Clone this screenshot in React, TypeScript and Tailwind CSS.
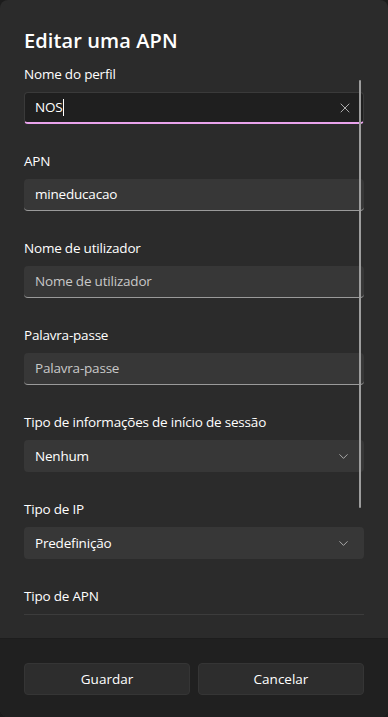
import { X, ChevronDown } from "lucide-react";

const font = { fontFamily: '"Segoe UI", "Open Sans", "Noto Sans", sans-serif' };

function Label({ children }: { children: string }) {
  return <div className="h-5 text-[13.5px] leading-5 tracking-[-0.2px] text-[#ffffff]">{children}</div>;
}

function TextBox({ value, placeholder }: { value?: string; placeholder?: string }) {
  return (
    <div className="flex h-8 items-center rounded-[4px] border-b border-b-[#9a9a9a] bg-[#373737] px-[11px] text-[13.5px] tracking-[-0.2px]">
      {value ? (
        <span className="text-white">{value}</span>
      ) : (
        <span className="text-[#c8c8c8]">{placeholder}</span>
      )}
    </div>
  );
}

function Select({ value }: { value: string }) {
  return (
    <div className="flex h-8 items-center justify-between rounded-[4px] bg-[#373737] pl-[11px] pr-[13px] text-[13.5px] tracking-[-0.2px] text-white">
      <span>{value}</span>
      <ChevronDown size={15} strokeWidth={1.2} className="text-[#cfcfcf]" />
    </div>
  );
}

function Field({ label, children }: { label: string; children: React.ReactNode }) {
  return (
    <div className="flex flex-col gap-2">
      <Label>{label}</Label>
      {children}
    </div>
  );
}

export default function App() {
  return (
    <div className="h-[717px] w-[388px] bg-[#1c1c1c]" style={font}>
      <div className="flex h-full flex-col overflow-hidden rounded-lg bg-[#2b2b2b]">
        <div className="relative flex-1 overflow-hidden">
          <div className="px-6 pt-[27px]">
            <h1 className="text-[20px] font-semibold leading-7 tracking-[0.1px] text-white">Editar uma APN</h1>
            <div className="mt-[9px] flex flex-col gap-[27px]">
              <Field label="Nome do perfil">
                <div className="flex h-8 items-center justify-between rounded-[4px] border border-[#3a3a3a] border-b-2 border-b-[#e9a3ec] bg-[#1f1f1f] pl-[10px] pr-[10px] text-[13.5px] tracking-[-0.2px] text-white">
                  <span className="flex items-center">
                    NOS<span className="ml-[1px] inline-block h-[17px] w-px bg-white" />
                  </span>
                  <X size={16} strokeWidth={1.2} className="text-[#cfcfcf]" />
                </div>
              </Field>
              <Field label="APN">
                <TextBox value="mineducacao" />
              </Field>
              <Field label="Nome de utilizador">
                <TextBox placeholder="Nome de utilizador" />
              </Field>
              <Field label="Palavra-passe">
                <TextBox placeholder="Palavra-passe" />
              </Field>
              <Field label="Tipo de informações de início de sessão">
                <Select value="Nenhum" />
              </Field>
              <Field label="Tipo de IP">
                <Select value="Predefinição" />
              </Field>
              <Field label="Tipo de APN">
                <div className="h-8 border-t border-[#3c3c3c]" />
              </Field>
            </div>
          </div>
          <div className="absolute left-[359px] top-[80px] h-[428px] w-[2px] rounded-full bg-[#9d9d9d]" />
        </div>
        <div className="flex h-[79px] gap-2 border-t border-[#1d1d1d] bg-[#202020] px-6 pt-[24px]">
          <button className="h-8 flex-1 rounded-[4px] border border-[#353535] bg-[#2d2d2d] text-[13.5px] text-white">
            Guardar
          </button>
          <button className="h-8 flex-1 rounded-[4px] border border-[#353535] bg-[#2d2d2d] text-[13.5px] text-white">
            Cancelar
          </button>
        </div>
      </div>
    </div>
  );
}
